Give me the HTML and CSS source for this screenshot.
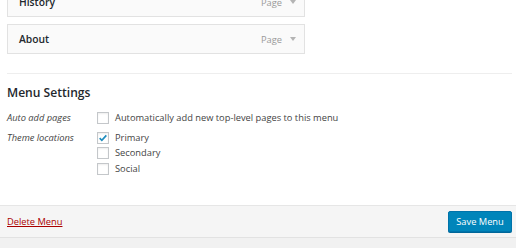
FILE: index.html
```html
<!DOCTYPE html>
<html>
<head>
<meta charset="utf-8">
<link rel="stylesheet" href="styles.css">
</head>
<body>
<div class="panel">
  <div class="body">
    <ul class="items">
      <li class="item"><span class="title">History</span><span class="type">Page <span class="arrow"></span></span></li>
      <li class="item"><span class="title">About</span><span class="type">Page <span class="arrow"></span></span></li>
    </ul>
    <div class="settings">
      <h3 class="heading">Menu Settings</h3>
      <div class="row">
        <div class="label">Auto add pages</div>
        <div class="opts">
          <label class="opt"><span class="cb"></span>Automatically add new top-level pages to this menu</label>
        </div>
      </div>
      <div class="row">
        <div class="label">Theme locations</div>
        <div class="opts">
          <label class="opt"><span class="cb checked"><svg viewBox="0 0 12 12" width="10" height="10"><path d="M2 6.2 L4.6 8.8 L10 2.8" fill="none" stroke="#1e8cbe" stroke-width="2"/></svg></span>Primary</label>
          <label class="opt"><span class="cb"></span>Secondary</label>
          <label class="opt"><span class="cb"></span>Social</label>
        </div>
      </div>
    </div>
  </div>
  <div class="footer">
    <a class="delete" href="#">Delete Menu</a>
    <button class="save">Save Menu</button>
  </div>
</div>
</body>
</html>
```
FILE: styles.css
```css
html, body {
  margin: 0;
  padding: 0;
  background: #f1f1f1;
  font-family: "Open Sans", sans-serif;
  color: #222;
  overflow: hidden;
}
.panel {
  background: #fff;
}
.body {
  padding: 0 4px 0 7px;
}
.items {
  list-style: none;
  margin: -13px 0 0 0;
  padding: 0 0 19px 0;
  border-bottom: 1px solid #eeeeee;
}
.item {
  box-sizing: border-box;
  width: 298px;
  height: 30px;
  margin-bottom: 7px;
  border: 1px solid #e2e2e2;
  background: #fafafa;
  display: flex;
  align-items: center;
  justify-content: space-between;
  padding: 0 8px 0 11px;
  font-size: 10.3px;
}
.item:last-child { margin-bottom: 0; }
.title {
  font-weight: 600;
  color: #23282d;
}
.type {
  color: #999;
  font-size: 9.3px;
  display: flex;
  align-items: center;
  gap: 8px;
}
.arrow {
  width: 0;
  height: 0;
  border-left: 3px solid transparent;
  border-right: 3px solid transparent;
  border-top: 4px solid #b4b4b4;
}
.settings {
  padding: 10px 0 28px 0;
}
.heading {
  margin: 0 0 9px 0;
  font-size: 12.1px;
  font-weight: 600;
  color: #23282d;
  line-height: 17px;
}
.row {
  display: flex;
  margin-bottom: 4px;
}
.row:last-child { margin-bottom: 0; }
.label {
  width: 90px;
  flex: none;
  font-style: italic;
  font-size: 9.3px;
  color: #444;
  line-height: 16px;
}
.opts {
  display: flex;
  flex-direction: column;
}
.opt {
  display: flex;
  align-items: center;
  font-size: 9.3px;
  color: #444;
  line-height: 16px;
  height: 15.5px;
}
.cb {
  box-sizing: border-box;
  width: 12px;
  height: 12px;
  border: 1px solid #c4c7ca;
  background: #fff;
  box-shadow: inset 0 1px 2px rgba(0,0,0,0.07);
  margin-right: 6px;
  display: flex;
  align-items: center;
  justify-content: center;
}
.footer {
  height: 31px;
  border-top: 1px solid #e6e6e6;
  border-bottom: 1px solid #e2e2e2;
  background: #f5f5f5;
  display: flex;
  align-items: center;
  justify-content: space-between;
  padding: 0 4px 0 7px;
}
.delete {
  color: #a00;
  font-size: 9.3px;
  text-decoration: underline;
}
.save {
  font-family: "Open Sans", sans-serif;
  font-size: 9.3px;
  color: #fff;
  background: #0085ba;
  border: 1px solid #0073aa;
  border-radius: 2px;
  height: 21px;
  width: 64px;
  padding: 0;
  box-shadow: 0 1px 0 #006799;
  margin-top: 1px;
}
```
